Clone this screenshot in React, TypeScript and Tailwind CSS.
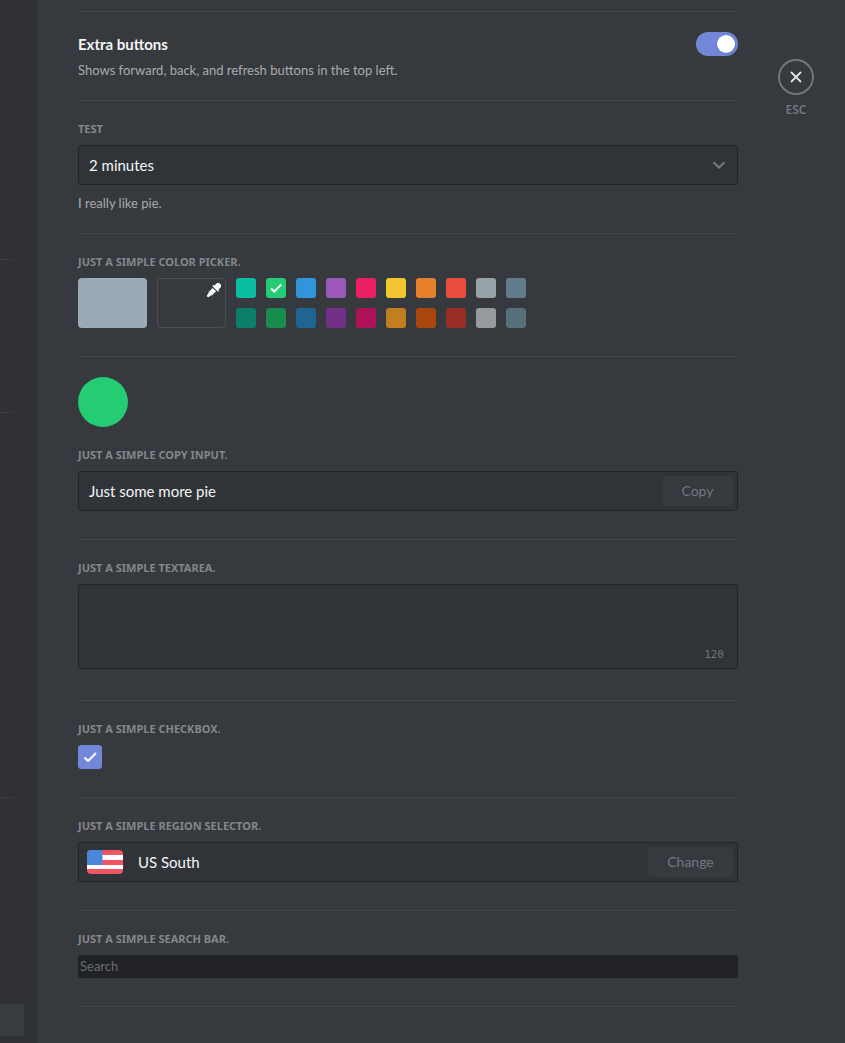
import { useState, type ReactNode } from "react";

const SWATCHES = [
  { name: "Teal", color: "bg-[#09bfa0]" },
  { name: "Green", color: "bg-[#24cc73]" },
  { name: "Blue", color: "bg-[#3195dc]" },
  { name: "Purple", color: "bg-[#9d58b7]" },
  { name: "Pink", color: "bg-[#eb1f63]" },
  { name: "Yellow", color: "bg-[#f0c72e]" },
  { name: "Orange", color: "bg-[#e7802b]" },
  { name: "Red", color: "bg-[#e84e40]" },
  { name: "Silver", color: "bg-[#95a3a6]" },
  { name: "Slate", color: "bg-[#627b8a]" },
  { name: "Dark teal", color: "bg-[#0a806b]" },
  { name: "Dark green", color: "bg-[#188d4e]" },
  { name: "Dark blue", color: "bg-[#1f6593]" },
  { name: "Dark purple", color: "bg-[#733089]" },
  { name: "Dark pink", color: "bg-[#af1258]" },
  { name: "Ochre", color: "bg-[#c37e1f]" },
  { name: "Rust", color: "bg-[#aa450b]" },
  { name: "Brick", color: "bg-[#992e26]" },
  { name: "Grey", color: "bg-[#979b9e]" },
  { name: "Dark slate", color: "bg-[#566f7b]" },
];

const LABEL = "block font-['Noto_Sans',sans-serif] text-[11px] leading-4 font-bold uppercase text-[#84878b] mb-2";
const FIELD = "rounded-[3px] border border-[#212327] bg-[#303338]";

function Section({ children, className = "pb-7" }: { children: ReactNode; className?: string }) {
  return <section className={`border-b border-[#43464b] pt-5 ${className}`}>{children}</section>;
}

function Check({ className }: { className: string }) {
  return (
    <svg viewBox="0 0 18 18" className={className} fill="none" stroke="currentColor" strokeWidth="2.2" aria-hidden="true">
      <path d="M3.5 9.5 7 13 15 5" />
    </svg>
  );
}

function Dropper() {
  return (
    <svg viewBox="0 0 16 16" className="size-3.5" fill="#fff" aria-hidden="true">
      <path d="M15 1a3.2 3.2 0 0 0-4.6 0L8.5 2.9l-.9-.9-1.5 1.5 6.4 6.4L14 8.400l-.9-.9L15 5.600a3.200 3.200 0 0 0 0-4.600Z" />
      <path d="M6.500 5.600 1.900 10.200 1.400 12.500.4 13.500a1.400 1.400 0 0 0 2.100 2.100l1-1 2.300-.5 4.600-4.600Z" />
    </svg>
  );
}

function Flag() {
  return (
    <svg viewBox="0 0 36 24" className="h-6 w-9 rounded-[4px]" aria-hidden="true">
      <rect width="36" height="24" fill="#f25563" />
      <rect y="5" width="36" height="5" fill="#fff" />
      <rect y="15" width="36" height="4" fill="#fff" />
      <rect width="15.5" height="15" fill="#4b87d8" />
    </svg>
  );
}

export default function App() {
  const [extra, setExtra] = useState(true);
  const [picked, setPicked] = useState(1);
  const [checked, setChecked] = useState(true);
  const [text, setText] = useState("");

  return (
    <div className="flex min-h-screen bg-[#36393e] font-['Lato','Noto_Sans',sans-serif] text-[#f4f5f5]">
      <aside className="flex w-[38px] shrink-0 flex-col bg-[#303135] pr-6">
        <hr className="mt-[259px] border-[#3b3d41]" />
        <hr className="mt-[152px] border-[#3b3d41]" />
        <hr className="mt-[384px] border-[#3b3d41]" />
        <div className="mt-[206px] -mr-2.5 h-8 rounded-r-[3px] bg-[#393c40]" />
      </aside>

      <main className="min-w-0 flex-1 px-10">
        <div className="h-3 border-b border-[#43464b]" />
        <Section className="pb-5">
          <div className="flex h-6 items-center justify-between">
            <label htmlFor="extra" className="text-[15px] leading-6 font-bold">Extra buttons</label>
            <span className="relative flex h-6 w-[42px]">
              <input
                id="extra"
                type="checkbox"
                role="switch"
                checked={extra}
                onChange={(e) => setExtra(e.target.checked)}
                className="peer size-full cursor-pointer appearance-none rounded-full bg-[#72767d] checked:bg-[#7387da]"
              />
              <span className="pointer-events-none absolute top-[3px] left-[3px] size-[18px] rounded-full bg-white shadow peer-checked:left-[21px]" />
            </span>
          </div>
          <p className="mt-1 text-[13px] leading-5 text-[#a9abae]">Shows forward, back, and refresh buttons in the top left.</p>
        </Section>

        <Section className="pb-5">
          <label htmlFor="test" className={LABEL}>Test</label>
          <div className="relative">
            <select id="test" defaultValue="2" className={`h-10 w-full appearance-none px-2.5 text-[15px] ${FIELD}`}>
              <option value="1">1 minute</option>
              <option value="2">2 minutes</option>
              <option value="5">5 minutes</option>
            </select>
            <svg viewBox="0 0 14 8" className="pointer-events-none absolute top-4 right-3 h-2 w-3.5" fill="none" stroke="#72757a" strokeWidth="2.2" aria-hidden="true">
              <path d="M1.5 1.2 7 6.6 12.5 1.2" />
            </svg>
          </div>
          <p className="mt-2 text-[13px] leading-5 text-[#a9abae]">I really like pie.</p>
        </Section>

        <Section>
          <h2 className={LABEL}>Just a simple color picker.</h2>
          <div className="flex gap-2.5">
            <button type="button" aria-label="Default color" className="h-[50px] w-[69px] rounded-[4px] bg-[#9babb5]" />
            <button type="button" aria-label="Custom color" className="flex h-[50px] w-[69px] justify-end rounded-[4px] border border-[#4b4e53] pt-1 pr-1">
              <Dropper />
            </button>
            <div className="grid grid-cols-10 gap-2.5">
              {SWATCHES.map((s, i) => (
                <button
                  key={s.name}
                  type="button"
                  aria-label={s.name}
                  aria-pressed={picked === i}
                  onClick={() => setPicked(i)}
                  className={`flex size-5 items-center justify-center rounded-[3px] ${s.color}`}
                >
                  {picked === i && <Check className="size-4" />}
                </button>
              ))}
            </div>
          </div>
        </Section>

        <Section>
          <div className="mb-5 size-[50px] rounded-full bg-[#24cc73]" />
          <label htmlFor="copy" className={LABEL}>Just a simple copy input.</label>
          <div className={`flex h-10 items-center pr-1 pl-2.5 ${FIELD}`}>
            <input id="copy" readOnly value="Just some more pie" className="min-w-0 flex-1 bg-transparent text-[15px] outline-none" />
            <button type="button" className="h-[30px] w-[71px] rounded-[3px] bg-[#363a3f] text-sm text-[#72767f]">Copy</button>
          </div>
        </Section>

        <Section className="pb-[31px]">
          <label htmlFor="area" className={LABEL}>Just a simple textarea.</label>
          <div className="relative">
            <textarea
              id="area"
              maxLength={120}
              value={text}
              onChange={(e) => setText(e.target.value)}
              className={`block h-[85px] w-full resize-none p-2.5 text-[15px] outline-none ${FIELD}`}
            />
            <span className="pointer-events-none absolute right-3.5 bottom-1.5 font-['DejaVu_Sans_Mono',monospace] text-[11px] leading-4 text-[#72767a]">
              {120 - text.length}
            </span>
          </div>
        </Section>

        <Section>
          <label htmlFor="check" className={LABEL}>Just a simple checkbox.</label>
          <span className="relative flex size-6">
            <input
              id="check"
              type="checkbox"
              checked={checked}
              onChange={(e) => setChecked(e.target.checked)}
              className="size-full appearance-none rounded-[3px] border border-[#72767d] checked:border-[#7387da] checked:bg-[#7387da]"
            />
            {checked && <Check className="pointer-events-none absolute top-[3px] left-[3px] size-[18px]" />}
          </span>
        </Section>

        <Section>
          <h2 className={LABEL}>Just a simple region selector.</h2>
          <div className={`flex h-10 items-center pr-1 pl-2 ${FIELD}`}>
            <Flag />
            <span className="ml-[15px] flex-1 text-[15px]">US South</span>
            <button type="button" className="h-[30px] w-[85px] rounded-[3px] bg-[#363a3f] text-sm text-[#72767f]">Change</button>
          </div>
        </Section>

        <Section>
          <label htmlFor="search" className={LABEL}>Just a simple search bar.</label>
          <input
            id="search"
            type="search"
            placeholder="Search"
            className="block h-[23px] w-full rounded-[3px] bg-[#202225] px-0.5 pb-px text-[13px] outline-none placeholder:text-[#6a6d72]"
          />
        </Section>
      </main>

      <div className="flex w-[67px] shrink-0 flex-col items-start pt-[59px]">
        <button type="button" className="flex w-9 flex-col items-center gap-[7px] text-[#72767c]">
          <span className="flex size-9 items-center justify-center rounded-full border-2 border-[#72767c]">
            <svg viewBox="0 0 12 12" className="size-3" fill="none" stroke="#e3e4e5" strokeWidth="1.8" aria-hidden="true">
              <path d="M1 1 11 11M11 1 1 11" />
            </svg>
          </span>
          <span className="font-['Noto_Sans',sans-serif] text-xs leading-4 font-semibold">ESC</span>
        </button>
      </div>
    </div>
  );
}
